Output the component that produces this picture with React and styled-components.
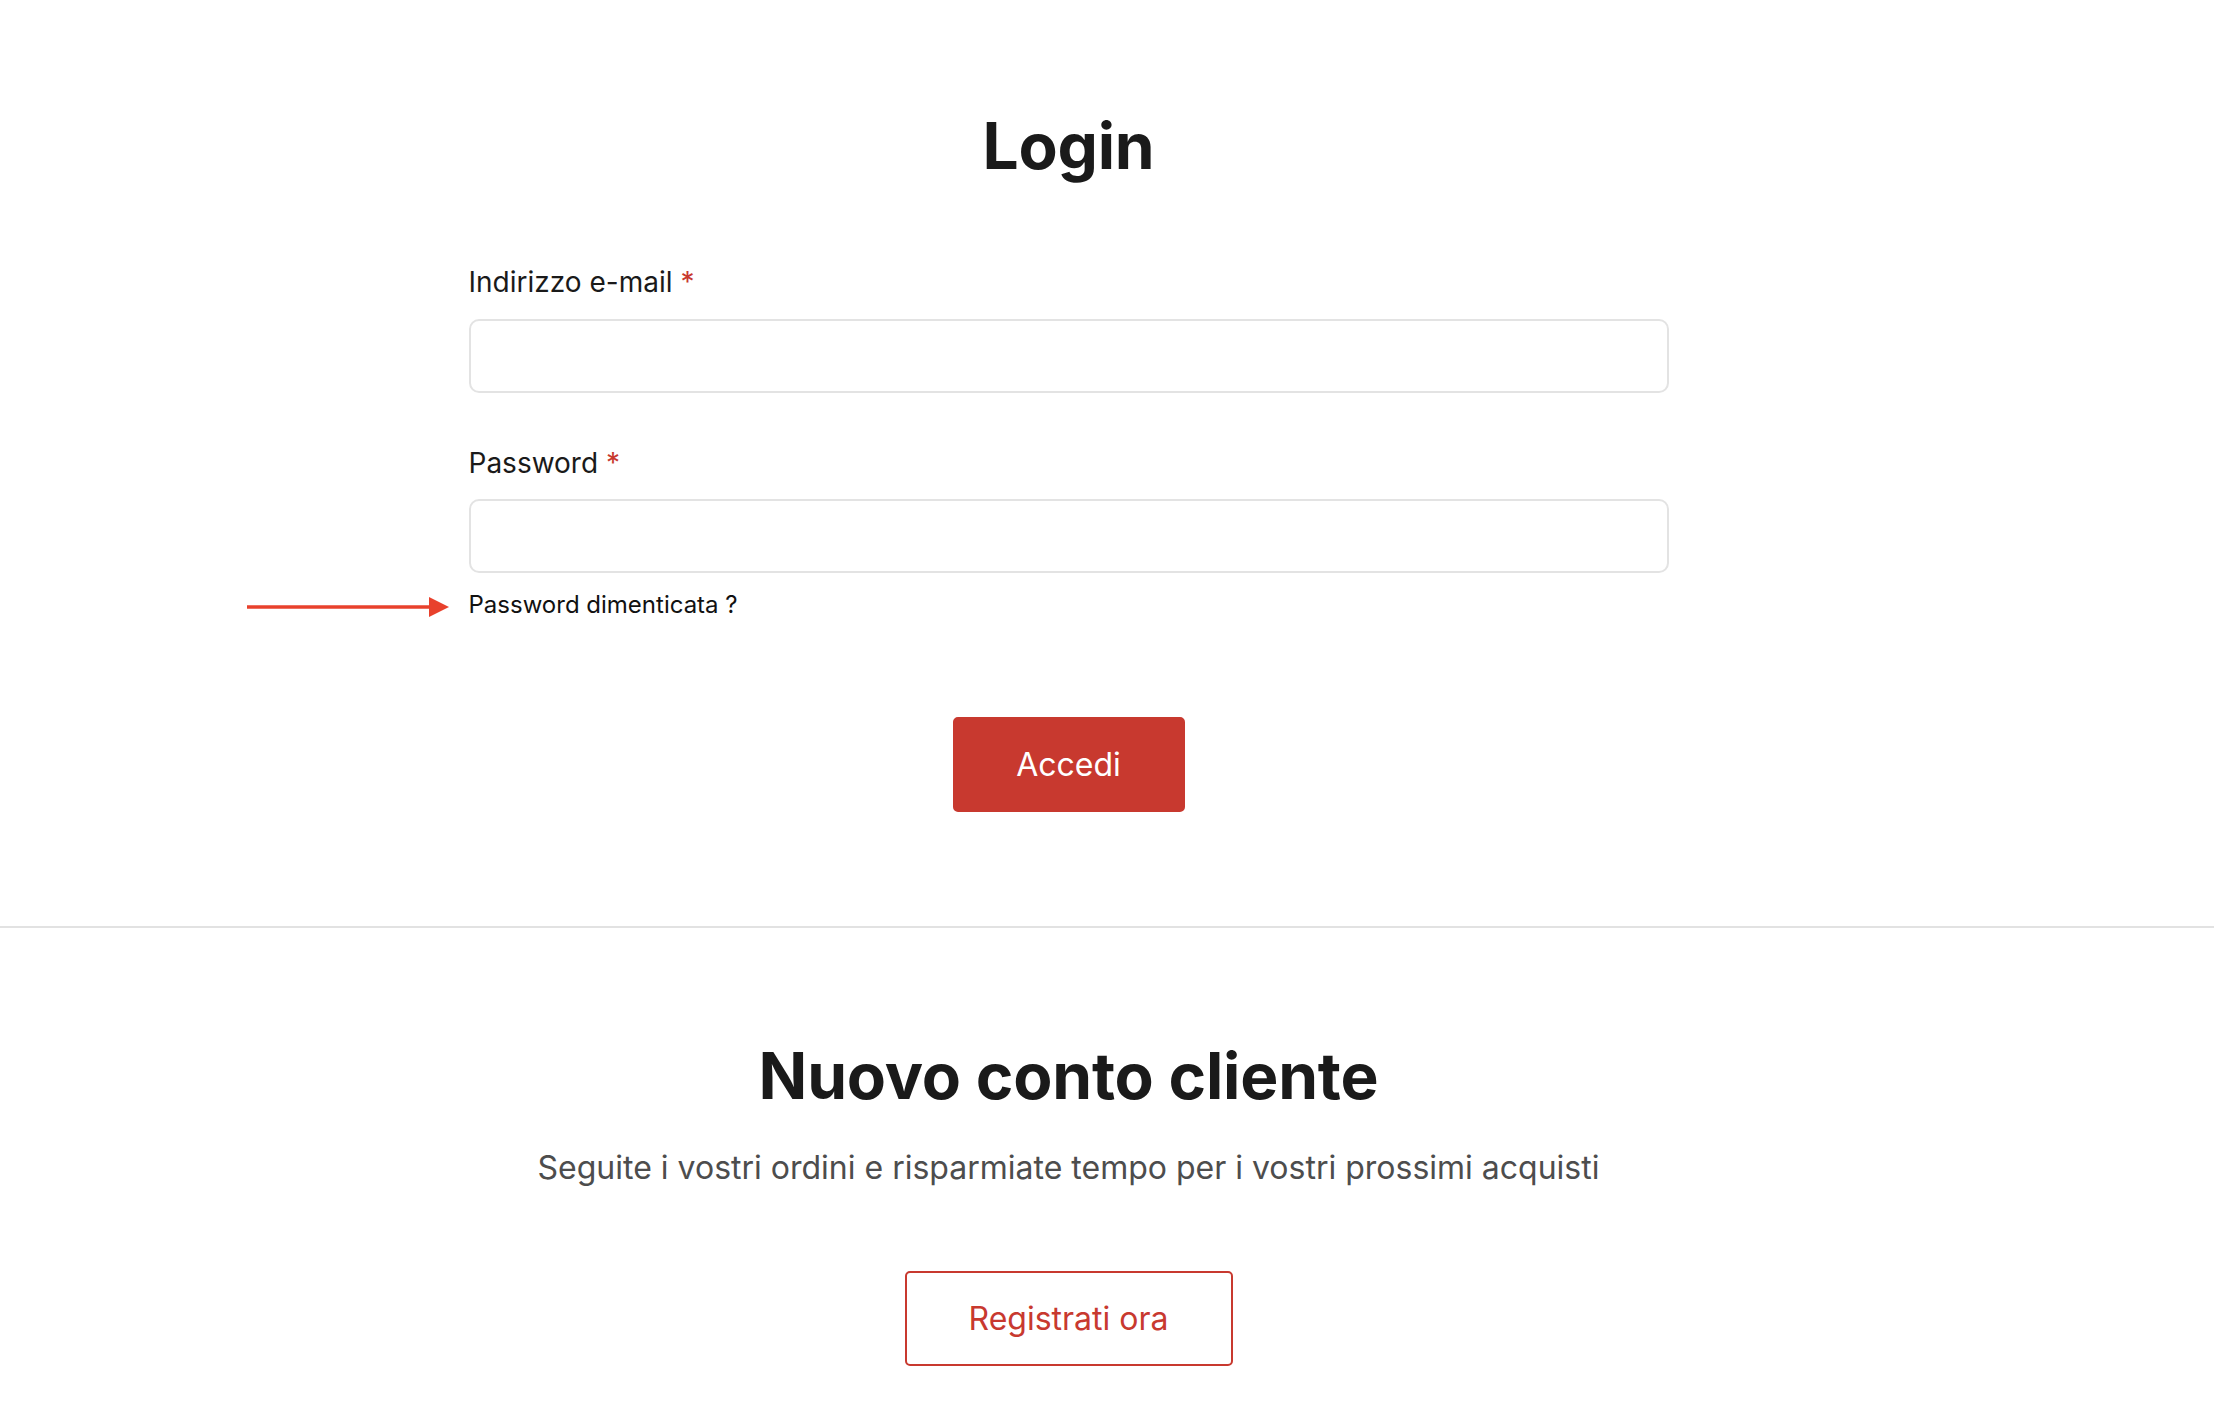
import React from 'react';
import styled, { createGlobalStyle } from 'styled-components';

const GlobalStyle = createGlobalStyle`
  html, body {
    margin: 0;
    padding: 0;
    background: #ffffff;
  }
  body {
    font-family: Inter, "Noto Sans", Arial, sans-serif;
    color: #1a1a1a;
    -webkit-font-smoothing: antialiased;
  }
  * {
    box-sizing: border-box;
  }
`;

const Shell = styled.div`
  padding-right: 77px;
`;

const Section = styled.section`
  display: flex;
  flex-direction: column;
  align-items: center;
  padding: ${(p) => p.$pad};
`;

const Title = styled.h1`
  margin: 0;
  font-size: 64px;
  line-height: 1;
  font-weight: 700;
  color: #1a1a1a;
  letter-spacing: -0.2px;
`;

const Form = styled.form`
  width: 1200px;
  margin-top: 88px;
  display: flex;
  flex-direction: column;
`;

const Field = styled.div`
  display: flex;
  flex-direction: column;
  margin-bottom: ${(p) => p.$gap || '0px'};
`;

const Label = styled.label`
  font-size: 28px;
  line-height: 1.2;
  color: #1a1a1a;
  margin-bottom: 19px;

  span {
    color: #c8392f;
    margin-left: 8px;
  }
`;

const Input = styled.input`
  height: 74px;
  width: 100%;
  border: 2px solid #e3e3e3;
  border-radius: 10px;
  padding: 0 20px;
  font-family: inherit;
  font-size: 24px;
  outline: none;
  background: #fff;
`;

const ForgotRow = styled.div`
  position: relative;
  margin-top: 18px;
  align-self: flex-start;
`;

const ForgotLink = styled.a`
  font-size: 24px;
  line-height: 1.2;
  color: #111;
  text-decoration: none;
  display: block;
`;

const Pointer = styled.svg`
  position: absolute;
  right: calc(100% + 20px);
  top: 50%;
  transform: translateY(-50%);
  margin-top: 1px;
`;

const Actions = styled.div`
  display: flex;
  justify-content: center;
  margin-top: 97px;
`;

const Button = styled.button`
  height: 95px;
  min-width: ${(p) => p.$width};
  padding: 0 40px;
  font-family: inherit;
  font-size: 32px;
  font-weight: 400;
  border-radius: 5px;
  cursor: pointer;
  border: 2px solid #c8392f;
  background: ${(p) => (p.$outline ? '#fff' : '#c8392f')};
  color: ${(p) => (p.$outline ? '#c8392f' : '#fff')};
`;

const Divider = styled.hr`
  margin: 0;
  border: 0;
  height: 2px;
  background: #e2e2e2;
`;

const Subtitle = styled.p`
  margin: 41px 0 84px;
  font-size: 32px;
  line-height: 1.2;
  color: #4d4d4d;
`;

function Arrow() {
  return (
    <Pointer width="202" height="22" viewBox="0 0 202 22">
      <line x1="0" y1="11" x2="184" y2="11" stroke="#e8412c" strokeWidth="3.5" />
      <polygon points="182,1 202,11 182,21" fill="#e8412c" />
    </Pointer>
  );
}

export default function App() {
  return (
    <>
      <GlobalStyle />
      <Shell>
        <Section $pad="114px 0 114px">
          <Title>Login</Title>
          <Form onSubmit={(e) => e.preventDefault()}>
            <Field $gap="54px">
              <Label htmlFor="email">
                Indirizzo e-mail<span>*</span>
              </Label>
              <Input id="email" type="email" />
            </Field>
            <Field>
              <Label htmlFor="password">
                Password<span>*</span>
              </Label>
              <Input id="password" type="password" />
            </Field>
            <ForgotRow>
              <Arrow />
              <ForgotLink href="#">Password dimenticata ?</ForgotLink>
            </ForgotRow>
            <Actions>
              <Button type="submit" $width="232px">Accedi</Button>
            </Actions>
          </Form>
        </Section>
      </Shell>
      <Divider />
      <Shell>
        <Section $pad="116px 0 61px">
          <Title>Nuovo conto cliente</Title>
          <Subtitle>Seguite i vostri ordini e risparmiate tempo per i vostri prossimi acquisti</Subtitle>
          <Button type="button" $outline $width="328px">Registrati ora</Button>
        </Section>
      </Shell>
    </>
  );
}
